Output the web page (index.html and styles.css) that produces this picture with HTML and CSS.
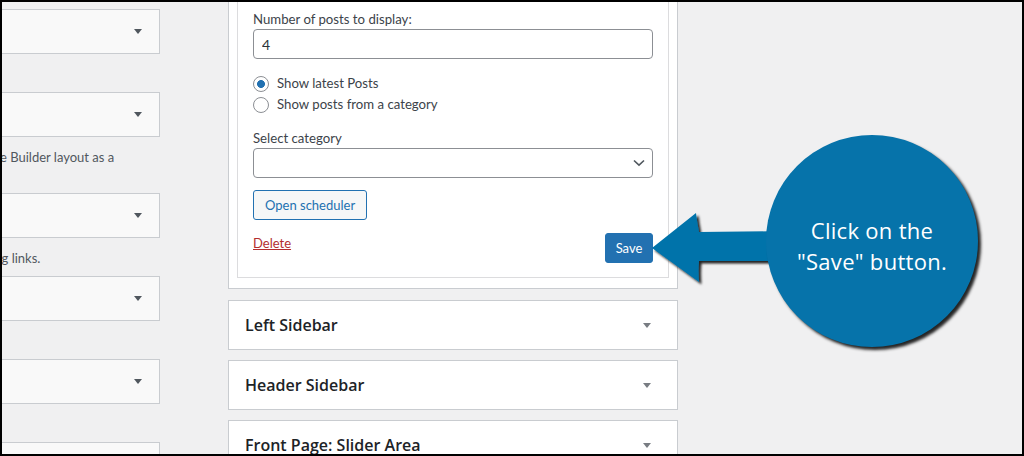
FILE: index.html
```html
<!DOCTYPE html>
<html lang="en">
<head>
<meta charset="utf-8">
<title>Widgets</title>
<link rel="stylesheet" href="styles.css">
</head>
<body>
<div class="frame">
  <div class="left-col">
    <div class="lbox lb-first"><span class="tri"></span></div>
    <div class="lbox lb-gap"><span class="tri"></span></div>
    <p class="ldesc ld-one">e Builder layout as a</p>
    <div class="lbox lb-after-one"><span class="tri"></span></div>
    <p class="ldesc ld-two">rg links.</p>
    <div class="lbox lb-after-two"><span class="tri"></span></div>
    <div class="lbox lb-gap"><span class="tri"></span></div>
    <div class="lbox lb-gap"><span class="tri"></span></div>
  </div>

  <div class="mid-col">
    <div class="widget">
      <div class="widget-inside">
        <form class="wform">
          <label class="flabel" for="num">Number of posts to display:</label>
          <input class="finput" id="num" type="text" value="4">
          <div class="radios">
            <label class="rrow"><input type="radio" name="mode" checked><span>Show latest Posts</span></label>
            <label class="rrow"><input type="radio" name="mode"><span>Show posts from a category</span></label>
          </div>
          <label class="flabel cat-label" for="cat">Select category</label>
          <div class="select-wrap">
            <select class="fselect" id="cat"><option></option></select>
            <svg class="chev" width="12" height="8" viewBox="0 0 12 8"><path d="M1 1.5 L6 6.2 L11 1.5" fill="none" stroke="#50575e" stroke-width="1.6"/></svg>
          </div>
          <button type="button" class="btn-secondary">Open scheduler</button>
          <div class="actions">
            <a href="#" class="delete">Delete</a>
            <button type="button" class="btn-primary">Save</button>
          </div>
        </form>
      </div>
    </div>

    <div class="panel"><h2>Left Sidebar</h2><span class="ptri"></span></div>
    <div class="panel"><h2>Header Sidebar</h2><span class="ptri"></span></div>
    <div class="panel"><h2>Front Page: Slider Area</h2><span class="ptri"></span></div>
  </div>

  <svg class="arrow-layer" width="1020" height="452" viewBox="2 2 1020 452" aria-hidden="true">
    <defs>
      <filter id="sh" x="-20%" y="-20%" width="140%" height="140%">
        <feDropShadow dx="2.5" dy="2.5" stdDeviation="1.3" flood-color="#000" flood-opacity="0.85"/>
      </filter>
    </defs>
    <path d="M652 248 L696 213 Q697 222 699 232 L790 231 L790 261 L699 261 Q698 271 699 282 Z" fill="#0673aa" filter="url(#sh)"/>
  </svg>
  <div class="bubble">
    <span>Click on the</span>
    <span>"Save" button.</span>
  </div>
</div>
</body>
</html>
```

FILE: styles.css
```css
* { box-sizing: border-box; }

html, body {
  margin: 0;
  padding: 0;
  background: #000;
}

body {
  font-family: Lato, "Liberation Sans", sans-serif;
  font-size: 13px;
  color: #3c434a;
}

.frame {
  position: relative;
  width: 1024px;
  height: 456px;
  border: 2px solid #000;
  background: #f0f0f1;
  overflow: hidden;
  display: flex;
  align-items: flex-start;
}

/* ---------- left column ---------- */
.left-col {
  margin-left: -40px;
  width: 198px;
  flex: none;
  display: flex;
  flex-direction: column;
}

.lbox {
  height: 45px;
  background: #f9f9f9;
  border: 1px solid #c9ccd0;
  display: flex;
  align-items: center;
  justify-content: flex-end;
  padding-right: 17px;
}

.lb-first { margin-top: 7px; }
.lb-gap { margin-top: 38px; }
.lb-after-one { margin-top: 27px; }
.lb-after-two { margin-top: 9px; }

.tri {
  width: 0;
  height: 0;
  border-left: 4px solid transparent;
  border-right: 4px solid transparent;
  border-top: 5px solid #50575e;
}

.ldesc {
  margin: 11px 0 0;
  line-height: 18px;
  font-size: 13px;
  color: #50575e;
  white-space: nowrap;
}
.ld-one { margin-left: 38px; }
.ld-two { margin-left: 35px; }

/* ---------- middle column ---------- */
.mid-col {
  margin-left: 68px;
  width: 450px;
  flex: none;
  display: flex;
  flex-direction: column;
}

.widget {
  background: #fff;
  border: 1px solid #c9ccd0;
  border-top: none;
}

.widget-inside {
  margin: 0 8px 10px;
  border: 1px solid #dcdcde;
  border-top: none;
  padding: 8px 15px 14px;
}

.wform {
  display: flex;
  flex-direction: column;
  align-items: flex-start;
}

.flabel {
  display: block;
  line-height: 18px;
  font-size: 13.2px;
  color: #3c434a;
}

.finput {
  margin-top: 1px;
  width: 100%;
  height: 30px;
  border: 1px solid #8c8f94;
  border-radius: 4px;
  padding: 0 8px;
  font-family: inherit;
  font-size: 14px;
  color: #2c3338;
  background: #fff;
}

.radios {
  margin-top: 14px;
  display: flex;
  flex-direction: column;
}

.rrow {
  display: flex;
  align-items: center;
  height: 21px;
  line-height: 21px;
  font-size: 13.2px;
  color: #3c434a;
}

.rrow input {
  appearance: none;
  -webkit-appearance: none;
  width: 16px;
  height: 16px;
  margin: 0 8px 0 0;
  border: 1px solid #8c8f94;
  border-radius: 50%;
  background: #fff;
}

.rrow input:checked {
  background: radial-gradient(circle, #2271b1 0 3.6px, #fff 4.3px);
}

.cat-label { margin-top: 14px; }

.select-wrap {
  position: relative;
  margin-top: 1px;
  width: 100%;
}

.fselect {
  appearance: none;
  -webkit-appearance: none;
  display: block;
  width: 100%;
  height: 30px;
  border: 1px solid #8c8f94;
  border-radius: 4px;
  background: #fff;
  font-family: inherit;
  font-size: 14px;
}

.chev {
  position: absolute;
  right: 8px;
  top: 11px;
}

.btn-secondary {
  margin-top: 12px;
  height: 30px;
  padding: 0 11px;
  border: 1px solid #2271b1;
  border-radius: 3px;
  background: #f6f7f7;
  color: #2271b1;
  font-family: inherit;
  font-size: 13px;
}

.actions {
  margin-top: 13px;
  width: 100%;
  display: flex;
  justify-content: space-between;
  align-items: flex-start;
}

.delete {
  line-height: 20px;
  font-size: 13px;
  color: #b32d2e;
  text-decoration: underline;
}

.btn-primary {
  height: 30px;
  width: 48px;
  padding: 0;
  border: 1px solid #2271b1;
  border-radius: 3px;
  background: #2271b1;
  color: #fff;
  font-family: inherit;
  font-size: 13px;
}

.panel {
  margin-top: 10px;
  height: 50px;
  background: #fff;
  border: 1px solid #c9ccd0;
  display: flex;
  align-items: center;
  justify-content: space-between;
  padding: 0 26px 0 16px;
}
.widget + .panel { margin-top: 11px; }

.panel h2 {
  margin: 0;
  font-family: "Open Sans", Lato, sans-serif;
  font-size: 16px;
  font-weight: 600;
  line-height: 22px;
  color: #1d2327;
}

.ptri {
  width: 0;
  height: 0;
  border-left: 4px solid transparent;
  border-right: 4px solid transparent;
  border-top: 5px solid #787c82;
}

/* ---------- callout overlay ---------- */
.arrow-layer {
  position: absolute;
  left: 0;
  top: 0;
  pointer-events: none;
}

.bubble {
  position: absolute;
  left: 764px;
  top: 133px;
  width: 212px;
  height: 212px;
  border-radius: 50%;
  background: #0673aa;
  box-shadow: 3px 3px 3px rgba(0, 0, 0, 0.85);
  display: flex;
  flex-direction: column;
  align-items: center;
  justify-content: center;
  padding-top: 10px;
  color: #fff;
  font-family: "Open Sans", sans-serif;
  font-size: 22px;
  letter-spacing: 0.3px;
  line-height: 31px;
}
```
